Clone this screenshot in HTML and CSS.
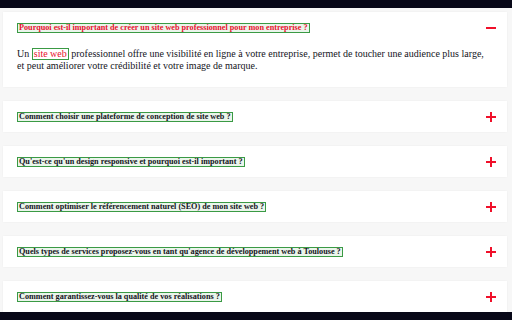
FILE: index.html
```html
<!DOCTYPE html>
<html lang="fr">
<head>
    <meta charset="UTF-8">
    <meta name="viewport" content="width=device-width, initial-scale=1.0">
    <title>FAQ</title>
    <link rel="stylesheet" href="styles.css">
</head>
<body>
    <div class="topbar"></div>

    <main class="faq">
        <div class="faq-item open">
            <div class="faq-question">
                <span class="mark title-red">Pourquoi est-il important de créer un site web professionnel pour mon entreprise ?</span>
                <span class="toggle minus"></span>
            </div>
            <p class="faq-answer">Un <span class="mark link">site web</span> professionnel offre une visibilité en ligne à votre entreprise, permet de toucher une audience plus large, et peut améliorer votre crédibilité et votre image de marque.</p>
        </div>

        <div class="faq-item">
            <div class="faq-question">
                <span class="mark">Comment choisir une plateforme de conception de site web ?</span>
                <span class="toggle plus"></span>
            </div>
        </div>

        <div class="faq-item">
            <div class="faq-question">
                <span class="mark">Qu'est-ce qu'un design responsive et pourquoi est-il important ?</span>
                <span class="toggle plus"></span>
            </div>
        </div>

        <div class="faq-item">
            <div class="faq-question">
                <span class="mark">Comment optimiser le référencement naturel (SEO) de mon site web ?</span>
                <span class="toggle plus"></span>
            </div>
        </div>

        <div class="faq-item">
            <div class="faq-question">
                <span class="mark">Quels types de services proposez-vous en tant qu'agence de développement web à Toulouse ?</span>
                <span class="toggle plus"></span>
            </div>
        </div>

        <div class="faq-item">
            <div class="faq-question">
                <span class="mark">Comment garantissez-vous la qualité de vos réalisations ?</span>
                <span class="toggle plus"></span>
            </div>
        </div>
    </main>

    <div class="bottombar"></div>
</body>
</html>
```

FILE: styles.css
```css
body {
    margin: 0;
    padding: 0;
    background-color: #f7f7f7;
    font-family: "Liberation Serif", "DejaVu Serif", serif;
    color: #14141c;
    height: 320px;
    overflow: hidden;
}

.topbar {
    height: 8px;
    background-color: #080818;
}

.bottombar {
    height: 8px;
    background-color: #080818;
}

.faq {
    display: flex;
    flex-direction: column;
    gap: 14px;
    padding: 4px 5px 0 3px;
    height: 300px;
}

.faq-item {
    background-color: #fff;
    box-shadow: 0 0 2px rgba(0, 0, 0, 0.05);
    padding: 0 11px 0 14px;
}

.faq-question {
    display: flex;
    justify-content: space-between;
    align-items: center;
    height: 31px;
}

.faq-item.open .faq-question {
    height: 32px;
}

.mark {
    border: 1px solid #3a9a44;
    background-color: rgba(80, 170, 90, 0.12);
    font-size: 8.2px;
    font-weight: bold;
    line-height: 8px;
    padding: 0 1px;
}

.title-red {
    color: #e8112d;
}

.faq-answer {
    margin: 4px 3px 0 0;
    font-size: 10px;
    line-height: 12px;
    padding-bottom: 15px;
}

.faq-answer .mark {
    display: inline-block;
    font-size: 10px;
    font-weight: normal;
    line-height: 10px;
    background-color: transparent;
}

.link {
    color: #e8112d;
}

.toggle {
    position: relative;
    width: 10px;
    height: 10px;
    flex-shrink: 0;
}

.toggle::before,
.toggle::after {
    content: "";
    position: absolute;
    background-color: #f0102a;
}

.toggle::before {
    left: 0;
    top: 4px;
    width: 10px;
    height: 2px;
}

.plus::after {
    left: 4px;
    top: 0;
    width: 2px;
    height: 10px;
}
```
